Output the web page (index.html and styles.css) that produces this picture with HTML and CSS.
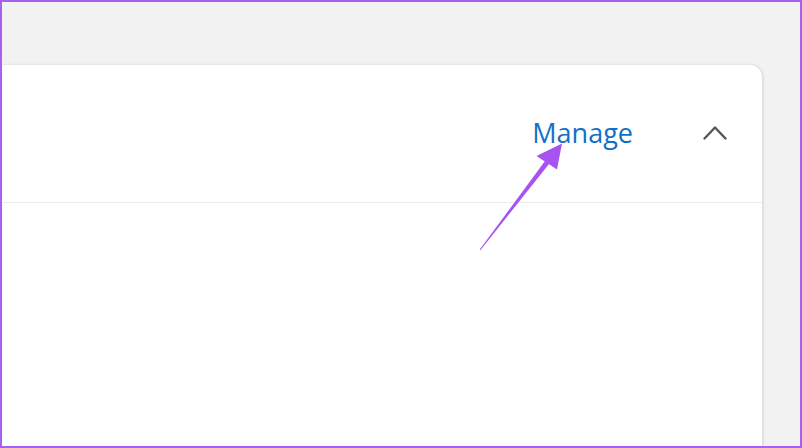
FILE: index.html
```html
<!DOCTYPE html>
<html lang="en">
<head>
<meta charset="utf-8">
<link rel="stylesheet" href="styles.css">
</head>
<body>
<div class="frame">
  <section class="card">
    <header class="card-header">
      <a class="manage" href="#">Manage</a>
      <button class="collapse" aria-label="Collapse">
        <svg width="24" height="16" viewBox="0 0 24 16"><polyline points="1.5,14.5 12,3.5 22.5,14.5" fill="none" stroke="#555555" stroke-width="2.4" stroke-linecap="round" stroke-linejoin="round"/></svg>
      </button>
    </header>
    <div class="card-body"></div>
  </section>
  <svg class="pointer" width="802" height="448" viewBox="0 0 802 448">
    <polygon points="480.4,250.3 479.6,249.7 547,158.3 551,161.5" fill="#a653f2"/>
    <polygon points="562,143.5 536.5,156 557,169.5" fill="#a653f2"/>
  </svg>
</div>
</body>
</html>
```

FILE: styles.css
```css
* { box-sizing: border-box; }
html, body { margin: 0; padding: 0; }
body {
  font-family: "Open Sans", "Noto Sans", sans-serif;
  background: #f2f2f2;
}
.frame {
  position: relative;
  width: 802px;
  height: 448px;
  border: 2px solid #a562f0;
  background: #f2f2f2;
  display: flex;
  flex-direction: column;
  overflow: hidden;
}
.card {
  margin-top: 63px;
  margin-right: 38px;
  flex: 1;
  background: #ffffff;
  border-top-right-radius: 12px;
  box-shadow: 1px 0 3px rgba(0, 0, 0, 0.13);
  display: flex;
  flex-direction: column;
}
.card-header {
  height: 138px;
  border-bottom: 1px solid #ececec;
  display: flex;
  align-items: center;
  justify-content: flex-end;
  padding-right: 35px;
  gap: 70px;
}
.manage {
  font-size: 27px;
  color: #1170c6;
  text-decoration: none;
  line-height: 1;
  padding-bottom: 2px;
}
.collapse {
  border: 0;
  background: none;
  padding: 0;
  width: 24px;
  height: 16px;
  display: flex;
  margin-bottom: 3px;
}
.card-body { flex: 1; }
.pointer {
  position: absolute;
  left: -2px;
  top: -2px;
  pointer-events: none;
}
```
